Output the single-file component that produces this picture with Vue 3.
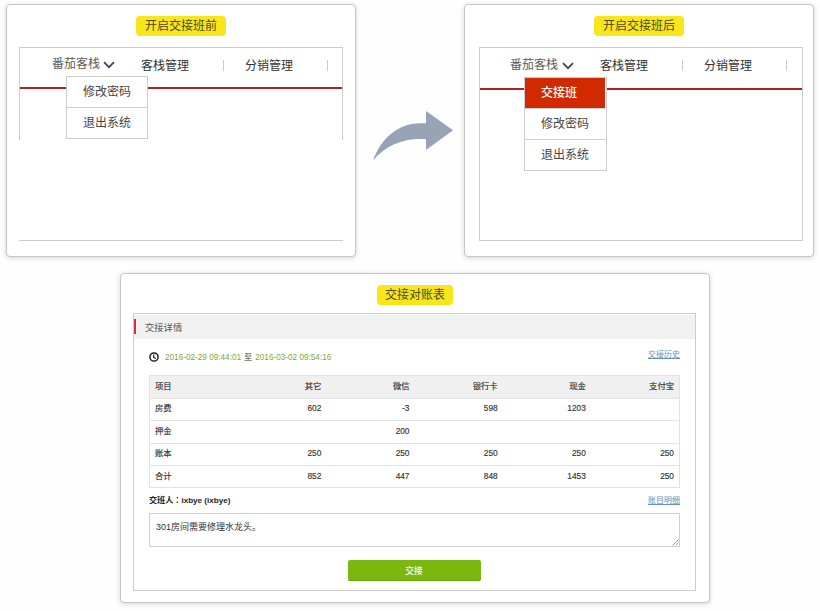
<script setup>
const panels = [
  { key: 'before', title: '开启交接班前', items: ['修改密码', '退出系统'], active: '' },
  { key: 'after', title: '开启交接班后', items: ['交接班', '修改密码', '退出系统'], active: '交接班' },
]
const columns = ['项目', '其它', '微信', '银行卡', '现金', '支付宝']
const rows = [
  ['房费', '602', '-3', '598', '1203', ''],
  ['押金', '', '200', '', '', ''],
  ['账本', '250', '250', '250', '250', '250'],
  ['合计', '852', '447', '848', '1453', '250'],
]
</script>

<template>
  <main class="page">
    <div class="compare">
      <template v-for="(p, i) in panels" :key="p.key">
        <svg v-if="i === 1" class="arrow" viewBox="0 0 108 60" width="108" height="60">
          <path d="M17.3 52.3C24 32 41 15.2 64 15.2H70V3L97 22.3L70 42V31H64C46 31 29 38 17.3 52.3Z" fill="#98a3b5" />
        </svg>
        <section class="card small" :class="p.key">
          <h2 class="badge">{{ p.title }}</h2>
          <div class="frame">
            <div class="window">
              <nav class="nav">
                <div class="inn">
                  <span>番茄客栈</span>
                  <svg class="chev" viewBox="0 0 12 8" width="12" height="8">
                    <path d="M1 1.2L6 6.2L11 1.2" fill="none" stroke="#444" stroke-width="1.7" />
                  </svg>
                  <ul class="menu">
                    <li v-for="item in p.items" :key="item" :class="{ active: item === p.active }">{{ item }}</li>
                  </ul>
                </div>
                <span class="link">客栈管理</span>
                <i class="sep"></i>
                <span class="link">分销管理</span>
                <i class="sep"></i>
              </nav>
            </div>
          </div>
        </section>
      </template>
    </div>

    <section class="card large">
      <h2 class="badge">交接对账表</h2>
      <div class="report">
        <header class="report-head"><i class="mark"></i><span>交接详情</span></header>
        <div class="body">
          <div class="period">
            <svg viewBox="0 0 10 10" width="10" height="10">
              <circle cx="5" cy="5" r="4.1" fill="none" stroke="#222" stroke-width="1.5" />
              <path d="M4.7 2.5V5.2L6.6 6.8" fill="none" stroke="#222" stroke-width="1.2" />
            </svg>
            <span class="date">2016-02-29 09:44:01</span>
            <span class="to">至</span>
            <span class="date">2016-03-02 09:54:16</span>
            <a class="more history">交接历史</a>
          </div>
          <div class="table">
            <div class="tr th"><span v-for="c in columns" :key="c">{{ c }}</span></div>
            <div v-for="r in rows" :key="r[0]" class="tr">
              <span v-for="(c, n) in r" :key="n">{{ c }}</span>
            </div>
          </div>
          <div class="person"><b>交班人<span class="colon">：</span>ixbye (ixbye)</b><a class="more">账目明细</a></div>
          <div class="note">
            <span>301房间需要修理水龙头。</span>
            <svg class="grip" viewBox="0 0 7 7" width="7" height="7">
              <path d="M0.5 6.5L6.5 0.5M3.5 6.5L6.5 3.5" stroke="#888" stroke-width="0.8" />
            </svg>
          </div>
          <button class="submit">交接</button>
        </div>
      </div>
    </section>
  </main>
</template>

<style>
body {
  background: #fefefe;
  overflow: hidden;
}
</style>

<style scoped>
* {
  box-sizing: border-box;
}
.page {
  width: 820px;
  height: 611px;
  padding: 4px 6px;
  font-family: "Liberation Sans", "Noto Sans CJK SC", sans-serif;
  font-size: 12px;
  color: #333;
}
.compare {
  display: flex;
  height: 254px;
  align-items: flex-start;
}
.arrow {
  display: block;
  margin-top: 104px;
}
.card {
  display: flex;
  flex-direction: column;
  align-items: center;
  background: #fff;
  border: 1px solid #c6c6c6;
  border-radius: 4px;
  box-shadow: 0 1px 5px rgba(0, 0, 0, 0.16);
}
.small {
  width: 350px;
  height: 253px;
  padding: 11px 12px 0;
}
.after {
  padding: 11px 10px 0 14px;
}
.badge {
  margin: 0;
  height: 20px;
  padding: 0 9px;
  border-radius: 4px;
  background: #f8e61c;
  color: #4f4a1c;
  font-size: 12px;
  font-weight: 400;
  line-height: 21px;
  white-space: nowrap;
}
.after .badge {
  margin-right: 4px;
}
.frame {
  width: 324px;
  height: 194px;
  margin-top: 11px;
  border-top: 1px solid #ccc;
  border-bottom: 1px solid #ccc;
}
.window {
  height: 92px;
  border-left: 1px solid #ccc;
  border-right: 1px solid #ccc;
}
.after .window {
  height: 192px;
}
.nav {
  display: flex;
  height: 41px;
  padding: 0 0 5px 32px;
  align-items: center;
  border-bottom: 2px solid #ad241d;
}
.after .nav {
  height: 42px;
  padding-left: 30px;
}
.inn {
  position: relative;
  display: flex;
  align-items: center;
  gap: 3px;
  width: 89px;
  height: 18px;
  line-height: 16px;
  color: #5c5c5c;
}
.inn > span,
.link {
  padding-bottom: 2px;
}
.after .inn {
  width: 90px;
  gap: 4px;
}
.link + .sep {
  margin-left: 34px;
}
.sep {
  width: 1px;
  height: 11px;
  background: #ccc;
}
.sep + .link {
  margin-left: 21px;
}
.menu {
  position: absolute;
  z-index: 1;
  top: 20px;
  left: 14px;
  width: 82px;
  margin: 0;
  padding: 0;
  list-style: none;
  background: #fff;
  border: 1px solid #ccc;
  color: #444;
}
.after .menu {
  width: 83px;
  padding-right: 1px;
}
.menu li {
  height: 30px;
  padding-left: 16px;
  line-height: 31px;
}
.menu li + li {
  height: 31px;
  border-top: 1px solid #d2d2d6;
}
.menu .active {
  background: #d12a00;
  color: #fff;
  font-weight: 500;
}
.large {
  width: 590px;
  height: 330px;
  margin: 15px 0 0 114px;
  padding: 11px 13px 0 12px;
}
.large .badge {
  width: 76px;
  padding: 0 8px;
  margin-left: 1px;
}
.report {
  width: 563px;
  height: 278px;
  margin-top: 8px;
  border: 1px solid #ccc;
}
.report-head {
  display: flex;
  align-items: center;
  gap: 9px;
  height: 24px;
  margin-top: 1px;
  padding-bottom: 1px;
  background: #f1f1f1;
  color: #555;
  font-size: 9.3px;
}
.mark {
  width: 2px;
  height: 15px;
  background: #d3303c;
}
.body {
  display: flex;
  flex-direction: column;
  padding: 0 15px;
  font-size: 8.3px;
}
.period {
  display: flex;
  align-items: center;
  height: 36px;
  line-height: 12px;
  font-size: 8.2px;
}
.date {
  margin-left: 6px;
  padding-top: 1px;
  color: #7fa63c;
}
.to {
  margin-left: 3px;
  padding-top: 1px;
}
.to + .date {
  margin-left: 3px;
}
.more {
  margin-left: auto;
  color: #6491b5;
  font-size: 8px;
  text-decoration: underline;
}
.history {
  margin-bottom: 4px;
}
.table {
  height: 113px;
  border: 1px solid #e2e2e2;
}
.tr {
  display: grid;
  grid-template-columns: repeat(6, 1fr);
  align-items: center;
  height: 22.5px;
  padding-bottom: 2px;
  border-top: 1px solid #e4e4e4;
  line-height: 12px;
  text-align: right;
  -webkit-text-stroke: 0.15px currentColor;
}
.th {
  height: 21.5px;
  border-top: 0;
  background: #f0f0f0;
}
.tr span {
  padding: 0 5px;
}
.tr span:first-child {
  text-align: left;
}
.person {
  display: flex;
  align-items: center;
  height: 25px;
  padding-bottom: 2px;
  color: #222;
}
.person b {
  font-size: 8.1px;
}
.colon {
  font-family: "Noto Sans CJK TC", sans-serif;
}
.note {
  position: relative;
  height: 34px;
  padding: 7px 6px;
  border: 1px solid #d0d0d0;
  font-size: 9px;
  line-height: 13px;
}
.grip {
  position: absolute;
  right: 0;
  bottom: 0;
}
.submit {
  align-self: center;
  width: 133px;
  height: 21px;
  margin: 13px 1px 0 0;
  padding: 1px 0 0;
  border: 0;
  border-bottom: 1px solid #6ca50b;
  border-radius: 2px;
  background: #7ab80f;
  color: #fff;
  font-family: inherit;
  font-size: 8.7px;
  font-weight: 500;
  line-height: 20px;
}
</style>
